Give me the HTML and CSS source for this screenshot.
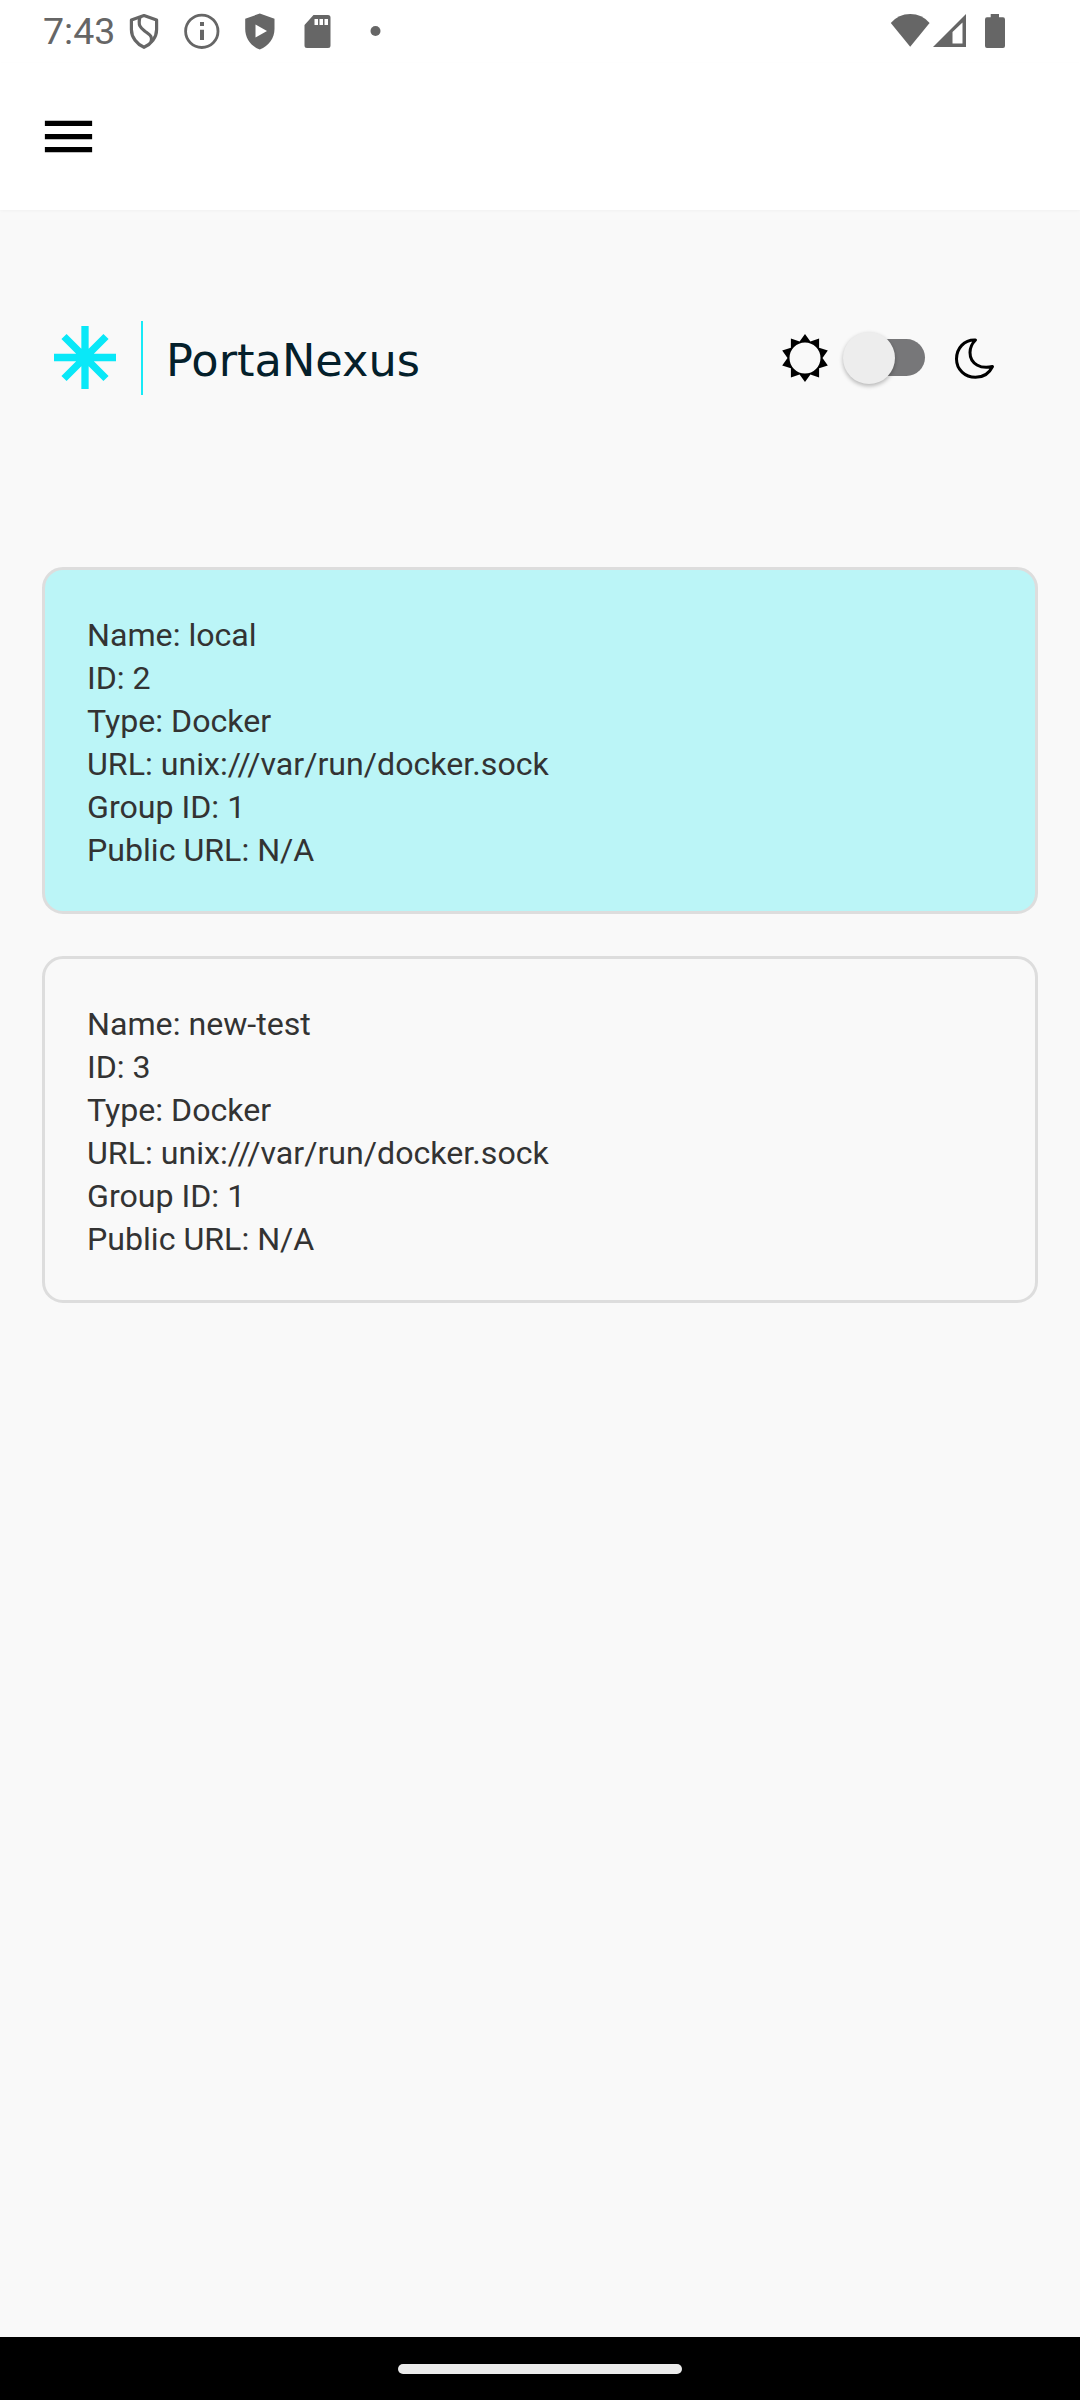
FILE: index.html
```html
<!DOCTYPE html>
<html lang="en">
<head>
<meta charset="utf-8">
<title>PortaNexus</title>
<link rel="stylesheet" href="styles.css">
</head>
<body>
<div class="screen">
  <div class="status-bar">
    <span class="clock">7:43</span>
    <div class="notifications">
      <svg viewBox="0 0 58 62"><path d="M29 15.600L41.600 20V29.500C41.600 37.500 36 44.300 29 47.300C22 44.300 16.400 37.500 16.400 29.500V20Z" fill="none" stroke="#666" stroke-width="3.200" stroke-linejoin="round"/><path d="M25 17C22.500 26.500 26 28 31 32C36 35.500 37.500 37 36 42" fill="none" stroke="#666" stroke-width="3.200"/></svg>
      <svg viewBox="0 0 58 62"><circle cx="28.800" cy="31.300" r="16.200" fill="none" stroke="#666" stroke-width="2.800"/><path d="M27 22H31V26H27ZM27 29.700H31V40H27Z" fill="#666"/></svg>
      <svg viewBox="0 0 58 62"><path fill-rule="evenodd" d="M28.800 13.500L43.500 18.800V29C43.500 38 38 46 28.800 49.500C19.500 46 14.200 38 14.200 29V18.800ZM24.500 24.500V37.500L36 31Z" fill="#666"/></svg>
      <svg viewBox="0 0 58 62"><path fill-rule="evenodd" d="M24.500 15H39Q41.500 15 41.500 17.500V45.500Q41.500 48 39 48H18Q15.500 48 15.500 45.500V25ZM25.500 19V25H29V19ZM30.500 19V25H34V19ZM35.500 19V25H39V19Z" fill="#666"/></svg>
      <svg viewBox="0 0 58 62"><circle cx="28.500" cy="31" r="5" fill="#666"/></svg>
    </div>
    <div class="system">
      <svg class="wifi" viewBox="0 0 40 62"><path d="M.8 23Q8.500 14 20.200 14Q32 14 39.600 23L20.200 46.700Z" fill="#666"/></svg>
      <svg class="signal" viewBox="0 0 34 62"><path fill-rule="evenodd" d="M0 47L33 14V47ZM19.500 32V43.500H29.500V22.500Z" fill="#666"/></svg>
      <svg class="battery" viewBox="0 0 20 62"><path d="M5.700 14H14V17.300H18Q20 17.300 20 19.500V46Q20 48 18 48H2Q0 48 0 46V19.500Q0 17.300 2 17.300H5.700Z" fill="#666"/></svg>
    </div>
  </div>
  <header class="app-bar">
    <svg class="menu-icon" viewBox="0 0 24 24"><path d="M3 18h18v-2H3v2zm0-5h18v-2H3v2zm0-7v2h18V6H3z"/></svg>
  </header>
  <main class="content">
    <div class="brand-row">
      <svg class="logo" viewBox="0 0 400 110">
        <path d="M45 26V89M14 57.500H76M24 36.500L66 78.500M66 36.500L24 78.500" stroke="#09e8f8" stroke-width="7.300"/>
        <path d="M102 21V95" stroke="#17eaf7" stroke-width="2"/>
        <text class="wordmark" x="126" y="76.300" textLength="254" lengthAdjust="spacingAndGlyphs">PortaNexus</text>
      </svg>
      <div class="theme">
        <svg class="sun" viewBox="-24 -24 48 48"><path fill-rule="evenodd" d="M0-24L5.400-16.600L14.100-19.400V-10.300L22.800-7.400L17.500 0L22.800 7.400L14.100 10.300V19.400L5.400 16.600L0 24L-5.400 16.600L-14.100 19.400V10.300L-22.800 7.400L-17.500 0L-22.800-7.400L-14.100-10.300V-19.400L-5.400-16.600ZM0-15.500A15.500 15.500 0 0 0 0 15.500A15.500 15.500 0 0 0 0-15.500Z"/></svg>
        <div class="switch"><div class="thumb"></div></div>
        <svg class="moon" viewBox="0 0 50 50"><path d="M25.500 7C14 6.500 6.500 15.500 6.500 26C6.500 36.500 15 44.300 25.500 44.300C33 44.300 39 41 42.500 33.500C31 36.500 20 31 20 19.500C20 14.500 22 10.500 25.500 7Z" fill="none" stroke="#000" stroke-width="3" stroke-linejoin="round"/></svg>
      </div>
    </div>
    <div class="cards">
      <section class="card selected">
        <p>Name: local</p>
        <p>ID: 2</p>
        <p>Type: Docker</p>
        <p>URL: unix:///var/run/docker.sock</p>
        <p>Group ID: 1</p>
        <p>Public URL: N/A</p>
      </section>
      <section class="card">
        <p>Name: new-test</p>
        <p>ID: 3</p>
        <p>Type: Docker</p>
        <p>URL: unix:///var/run/docker.sock</p>
        <p>Group ID: 1</p>
        <p>Public URL: N/A</p>
      </section>
    </div>
  </main>
  <footer class="nav-bar"><div class="handle"></div></footer>
</div>
</body>
</html>
```
FILE: styles.css
```css
* { box-sizing: border-box; }
body { margin: 0; font-family: Roboto, sans-serif; }
svg { display: block; flex: none; }
.screen { width: 1080px; height: 2400px; display: flex; flex-direction: column; background: #f9f9f9; }
.status-bar { height: 63px; display: flex; background: #fff; padding: 0 75px 0 43px; color: #666; }
.clock { width: 72px; font-size: 37.500px; line-height: 63px; white-space: nowrap; }
.notifications { display: flex; }
.notifications svg { width: 58px; height: 62px; }
.system { display: flex; margin-left: auto; }
.system svg { height: 62px; }
.wifi { width: 40px; }
.signal { width: 34px; margin-left: 3px; }
.battery { width: 20px; margin-left: 18px; }
.app-bar { height: 147px; padding: 42px 37px; background: #fff; box-shadow: 0 1px 3px rgba(0, 0, 0, .03); }
.menu-icon { width: 63px; height: 63px; }
.content { flex: 1; padding-top: 90px; }
.brand-row { height: 110px; padding: 0 80px 0 40px; display: flex; justify-content: space-between; }
.logo { width: 400px; height: 110px; }
.wordmark { font-family: "DejaVu Sans", sans-serif; font-size: 45px; fill: #04202b; }
.theme { display: flex; align-items: center; height: 115px; }
.sun { width: 48px; height: 48px; }
.switch { width: 68px; height: 37px; margin: 0 25px 0 28px; border-radius: 19px; background: #777779; display: flex; align-items: center; }
.thumb { flex: none; width: 52px; height: 52px; margin-left: -14px; border-radius: 50%; background: #ededed; box-shadow: 0 2px 4px rgba(0, 0, 0, .28); }
.moon { width: 50px; height: 50px; }
.cards { margin-top: 157px; padding: 0 42px; display: flex; flex-direction: column; gap: 42px; }
.card { height: 347px; padding: 44px 42px 36px; border: 3px solid #ddd; border-radius: 21px; color: #333; font-size: 32.150px; line-height: 43px; }
.card.selected { background: #bbf5f7; }
.card p { margin: 0; }
.nav-bar { height: 63px; background: #000; display: flex; justify-content: center; padding-top: 27px; }
.handle { width: 284px; height: 10px; border-radius: 5px; background: #ebebeb; }
```
